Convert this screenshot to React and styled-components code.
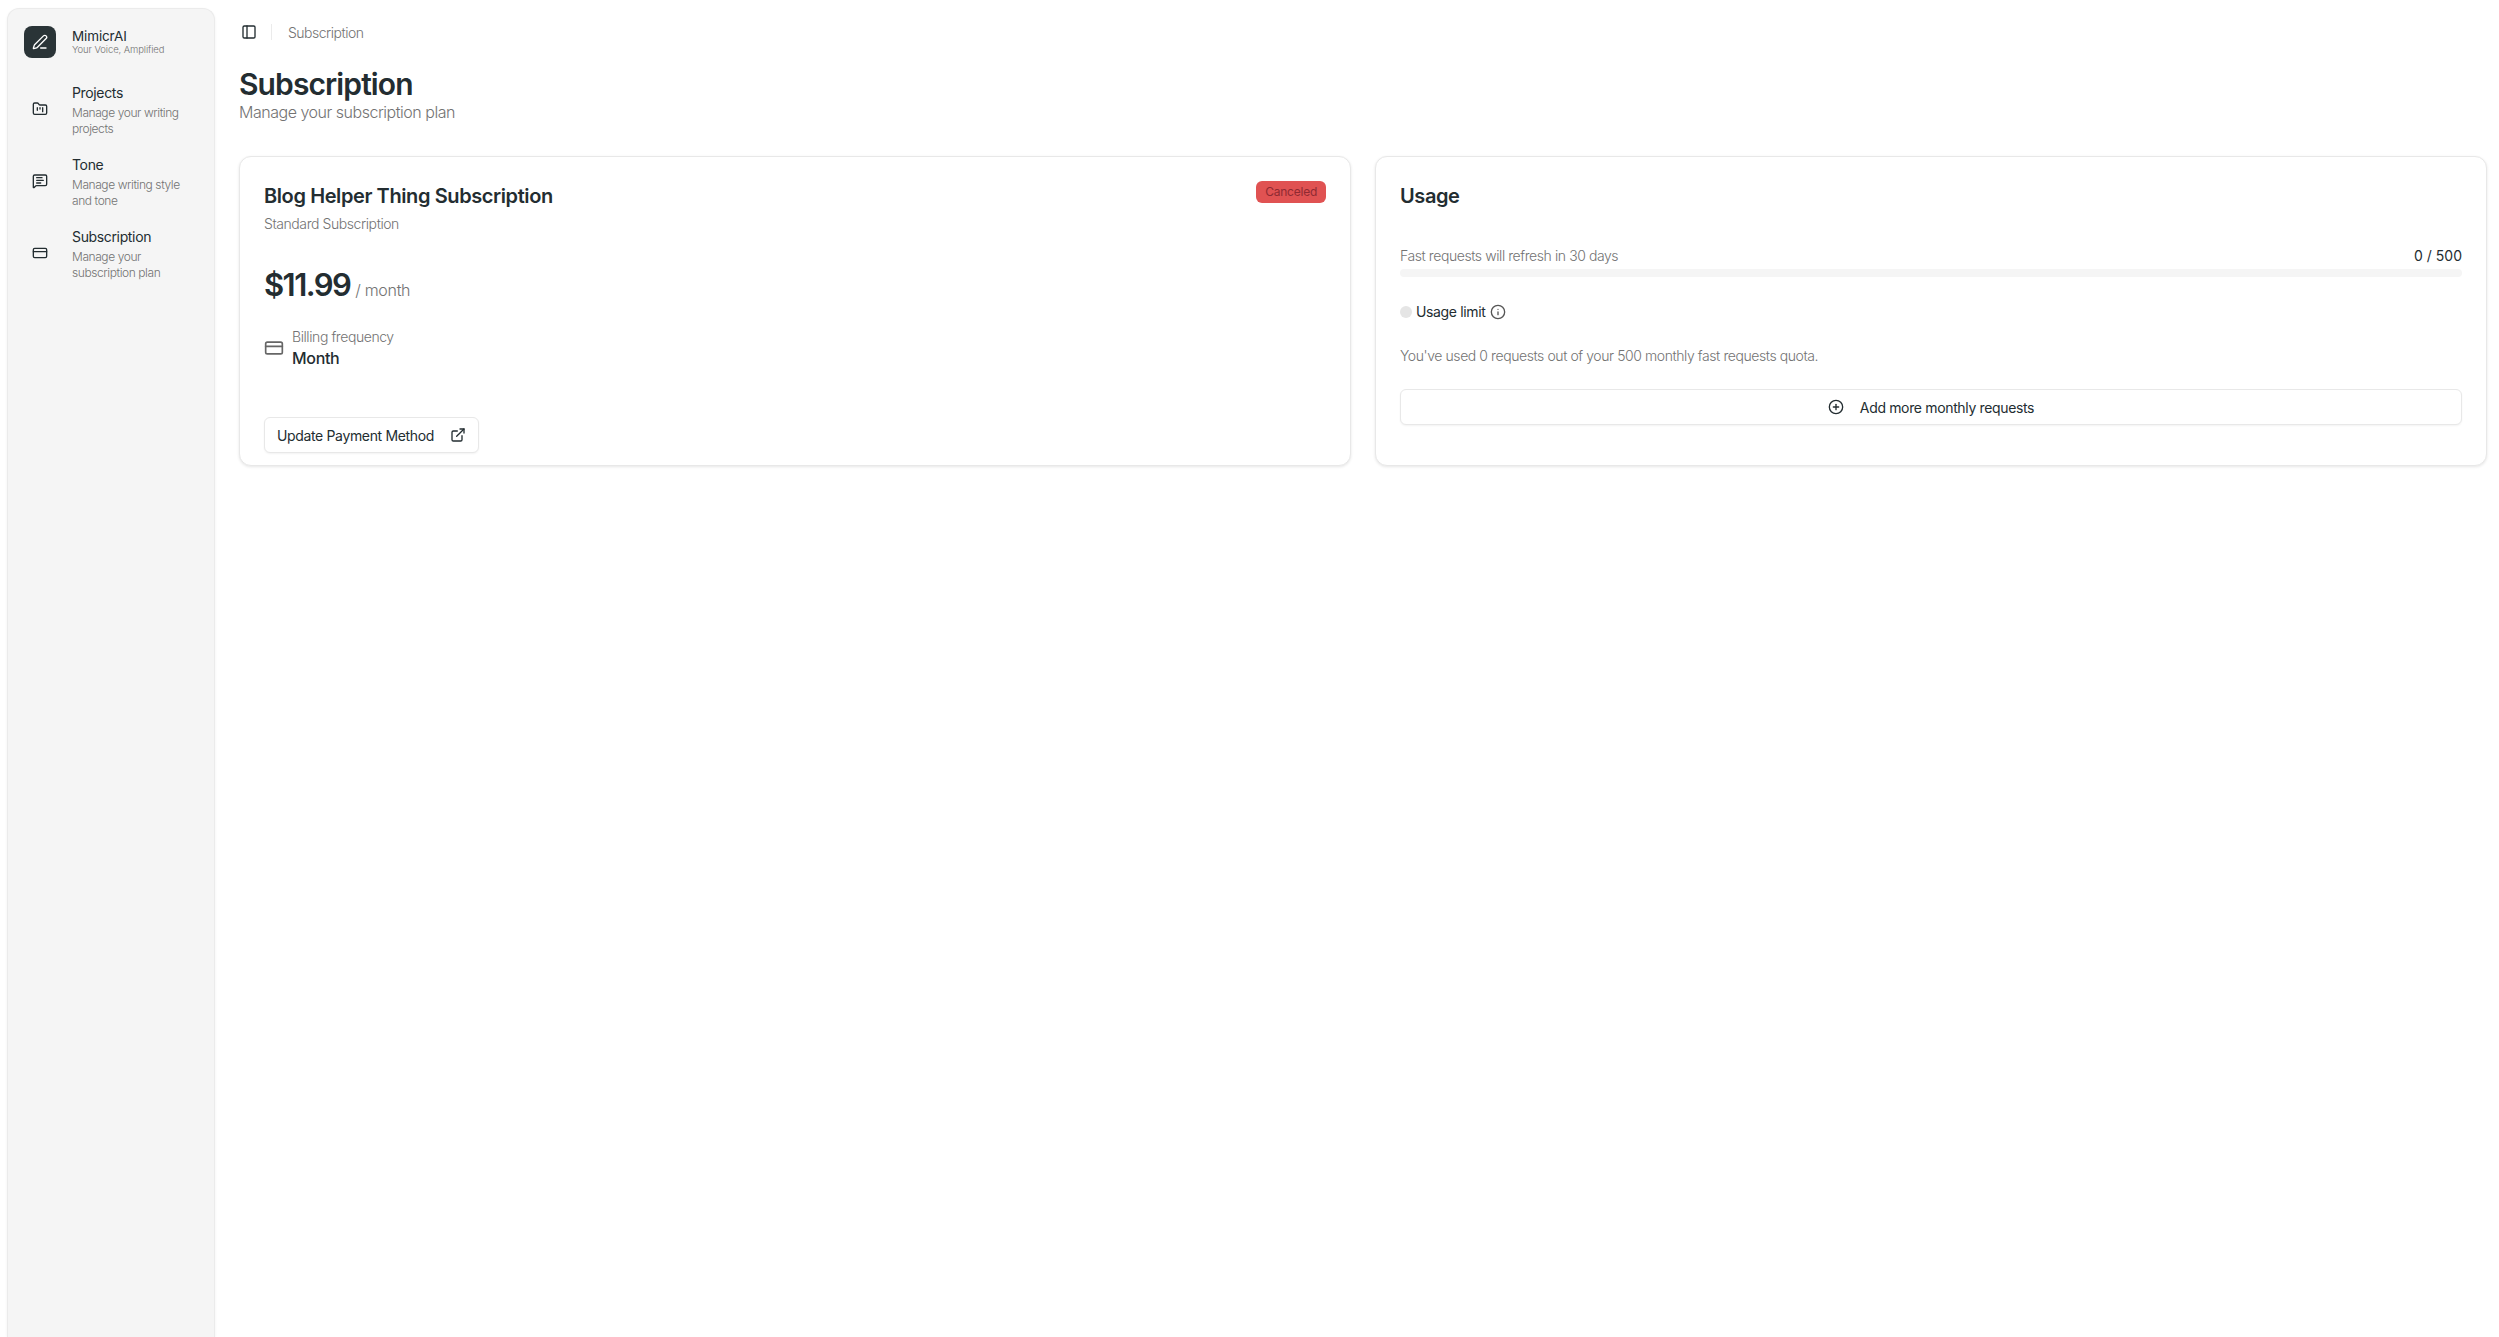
import React from 'react';
import styled, { createGlobalStyle } from 'styled-components';
import {
  PenLine,
  FolderKanban,
  MessageSquareText,
  CreditCard,
  PanelLeft,
  ExternalLink,
  CirclePlus,
  Info,
} from 'lucide-react';

const GlobalStyle = createGlobalStyle`
  * { box-sizing: border-box; }
  html, body { margin: 0; height: 100%; background: #fff; }
  body {
    font-family: Inter, "Liberation Sans", sans-serif;
    color: #232d31;
    overflow: hidden;
  }
`;

const Shell = styled.div`
  display: flex;
  height: 100vh;
`;

const Sidebar = styled.aside`
  flex: 0 0 208px;
  margin: 8px 0 0 7px;
  padding: 17px 16px;
  background: #f5f5f5;
  border: 1px solid #ebebeb;
  border-bottom: none;
  border-radius: 12px 12px 0 0;
  box-shadow: 0 1px 3px rgba(0, 0, 0, 0.06);
`;

const Brand = styled.div`
  display: flex;
  align-items: center;
  gap: 16px;
  margin-bottom: 16px;
`;

const LogoTile = styled.div`
  width: 32px;
  height: 32px;
  border-radius: 8px;
  background: #2a3437;
  color: #fff;
  display: flex;
  align-items: center;
  justify-content: center;
`;

const BrandName = styled.div`
  font-size: 13.5px;
  line-height: 15px;
  letter-spacing: -0.01em;
`;

const BrandTag = styled.div`
  font-size: 9.5px;
  line-height: 11px;
  font-weight: 300;
  color: #737373;
  letter-spacing: -0.01em;
`;

const Nav = styled.nav`
  display: flex;
  flex-direction: column;
`;

const NavItem = styled.a`
  display: flex;
  align-items: center;
  height: 72px;
  gap: 16px;
`;

const NavIcon = styled.div`
  flex: 0 0 32px;
  display: flex;
  justify-content: center;
  padding-bottom: 2px;
  color: #232d31;
`;

const NavTitle = styled.div`
  font-size: 14px;
  line-height: 20px;
  letter-spacing: -0.025em;
  margin-bottom: 2px;
`;

const NavDesc = styled.div`
  font-size: 12px;
  line-height: 16px;
  font-weight: 300;
  color: #737373;
  letter-spacing: -0.035em;
`;

const Main = styled.main`
  flex: 1;
  min-width: 0;
  padding: 0 12px 0 24px;
`;

const TopBar = styled.header`
  display: flex;
  align-items: center;
  height: 16px;
  margin-top: 24px;
  padding-left: 2px;
`;

const Divider = styled.div`
  width: 1px;
  height: 16px;
  background: #ebebeb;
  margin: 0 16px 0 14px;
`;

const Crumb = styled.span`
  font-size: 14px;
  font-weight: 300;
  color: #737373;
  letter-spacing: -0.035em;
`;

const PageTitle = styled.h1`
  margin: 26px 0 0;
  font-size: 30px;
  line-height: 36px;
  font-weight: 600;
  letter-spacing: -0.03em;
`;

const PageSub = styled.p`
  margin: -2px 0 0;
  font-size: 16px;
  line-height: 24px;
  font-weight: 300;
  color: #737373;
  letter-spacing: -0.03em;
`;

const Cards = styled.section`
  display: grid;
  grid-template-columns: 1fr 1fr;
  gap: 24px;
  margin-top: 32px;
`;

const Card = styled.div`
  height: 310px;
  padding: 24px 24px 12px;
  background: #fff;
  border: 1px solid #e8e8e8;
  border-radius: 12px;
  box-shadow: 0 1px 3px rgba(0, 0, 0, 0.1);
  display: flex;
  flex-direction: column;
`;

const CardHead = styled.div`
  display: flex;
  justify-content: space-between;
  align-items: flex-start;
`;

const CardTitle = styled.h2`
  margin: 1px 0 0;
  font-size: 20px;
  line-height: 28px;
  font-weight: 600;
  letter-spacing: -0.02em;
`;

const CardSub = styled.div`
  margin-top: 4px;
  font-size: 14px;
  line-height: 20px;
  font-weight: 300;
  color: #737373;
  letter-spacing: -0.03em;
`;

const Badge = styled.span`
  padding: 0 9px;
  height: 22px;
  line-height: 22px;
  border-radius: 6px;
  background: #e05252;
  color: #8f2a32;
  font-size: 12px;
  letter-spacing: -0.02em;
`;

const PriceRow = styled.div`
  display: flex;
  align-items: baseline;
  gap: 5px;
  margin-top: 31px;
`;

const Price = styled.span`
  font-size: 31px;
  line-height: 40px;
  font-weight: 600;
  letter-spacing: -0.05em;
`;

const Per = styled.span`
  font-size: 16px;
  font-weight: 300;
  color: #737373;
  letter-spacing: -0.02em;
`;

const BillingRow = styled.div`
  display: flex;
  align-items: center;
  gap: 8px;
  margin-top: 22px;
  color: #666;
`;

const BillingLabel = styled.div`
  font-size: 14px;
  line-height: 20px;
  font-weight: 300;
  color: #737373;
  letter-spacing: -0.03em;
`;

const BillingValue = styled.div`
  font-size: 16px;
  line-height: 22px;
  font-weight: 500;
  color: #232d31;
  letter-spacing: -0.02em;
`;

const OutlineButton = styled.button`
  display: flex;
  align-items: center;
  justify-content: center;
  height: 36px;
  background: #fff;
  border: 1px solid #e8e8e8;
  border-radius: 6px;
  box-shadow: 0 1px 2px rgba(0, 0, 0, 0.05);
  color: #232d31;
  font-family: inherit;
  font-size: 14px;
  font-weight: 400;
  letter-spacing: -0.025em;
  gap: ${(p) => p.$gap}px;
  padding: 0 12px;
  width: ${(p) => (p.$wide ? '100%' : 'auto')};
  align-self: ${(p) => (p.$wide ? 'stretch' : 'flex-start')};
  margin-top: ${(p) => (p.$wide ? '0' : 'auto')};
`;

const ProgressHead = styled.div`
  display: flex;
  justify-content: space-between;
  align-items: center;
  margin-top: 36px;
  font-size: 14px;
  line-height: 20px;
  font-weight: 300;
  color: #737373;
  letter-spacing: -0.03em;
`;

const ProgressCount = styled.span`
  color: #232d31;
  font-weight: 400;
  letter-spacing: 0;
`;

const Track = styled.div`
  height: 8px;
  margin-top: 3px;
  border-radius: 4px;
  background: #f5f5f5;
`;

const LimitRow = styled.div`
  display: flex;
  align-items: center;
  gap: 4px;
  margin-top: 25px;
  font-size: 14px;
  line-height: 20px;
  letter-spacing: -0.025em;
`;

const Dot = styled.span`
  width: 12px;
  height: 12px;
  border-radius: 50%;
  background: #e5e5e5;
`;

const LimitInfo = styled.span`
  display: flex;
  color: #555;
`;

const QuotaText = styled.p`
  margin: 24px 0 23px;
  font-size: 14px;
  line-height: 20px;
  font-weight: 300;
  color: #737373;
  letter-spacing: -0.03em;
`;

const navItems = [
  { title: 'Projects', desc: ['Manage your writing', 'projects'], icon: FolderKanban },
  { title: 'Tone', desc: ['Manage writing style', 'and tone'], icon: MessageSquareText },
  { title: 'Subscription', desc: ['Manage your', 'subscription plan'], icon: CreditCard },
];

export default function App() {
  return (
    <>
      <GlobalStyle />
      <Shell>
        <Sidebar>
          <Brand>
            <LogoTile>
              <PenLine size={16} />
            </LogoTile>
            <div>
              <BrandName>MimicrAI</BrandName>
              <BrandTag>Your Voice, Amplified</BrandTag>
            </div>
          </Brand>
          <Nav>
            {navItems.map((item) => (
              <NavItem key={item.title}>
                <NavIcon>
                  <item.icon size={16} />
                </NavIcon>
                <div>
                  <NavTitle>{item.title}</NavTitle>
                  <NavDesc>
                    {item.desc[0]}
                    <br />
                    {item.desc[1]}
                  </NavDesc>
                </div>
              </NavItem>
            ))}
          </Nav>
        </Sidebar>

        <Main>
          <TopBar>
            <PanelLeft size={16} />
            <Divider />
            <Crumb>Subscription</Crumb>
          </TopBar>
          <PageTitle>Subscription</PageTitle>
          <PageSub>Manage your subscription plan</PageSub>

          <Cards>
            <Card>
              <CardHead>
                <div>
                  <CardTitle>Blog Helper Thing Subscription</CardTitle>
                  <CardSub>Standard Subscription</CardSub>
                </div>
                <Badge>Canceled</Badge>
              </CardHead>
              <PriceRow>
                <Price>$11.99</Price>
                <Per>/ month</Per>
              </PriceRow>
              <BillingRow>
                <CreditCard size={20} />
                <div>
                  <BillingLabel>Billing frequency</BillingLabel>
                  <BillingValue>Month</BillingValue>
                </div>
              </BillingRow>
              <OutlineButton $gap={16}>
                Update Payment Method
                <ExternalLink size={16} />
              </OutlineButton>
            </Card>

            <Card>
              <CardTitle>Usage</CardTitle>
              <ProgressHead>
                <span>Fast requests will refresh in 30 days</span>
                <ProgressCount>0 / 500</ProgressCount>
              </ProgressHead>
              <Track />
              <LimitRow>
                <Dot />
                Usage limit
                <LimitInfo>
                  <Info size={16} />
                </LimitInfo>
              </LimitRow>
              <QuotaText>You've used 0 requests out of your 500 monthly fast requests quota.</QuotaText>
              <OutlineButton $wide $gap={16}>
                <CirclePlus size={16} />
                Add more monthly requests
              </OutlineButton>
            </Card>
          </Cards>
        </Main>
      </Shell>
    </>
  );
}
